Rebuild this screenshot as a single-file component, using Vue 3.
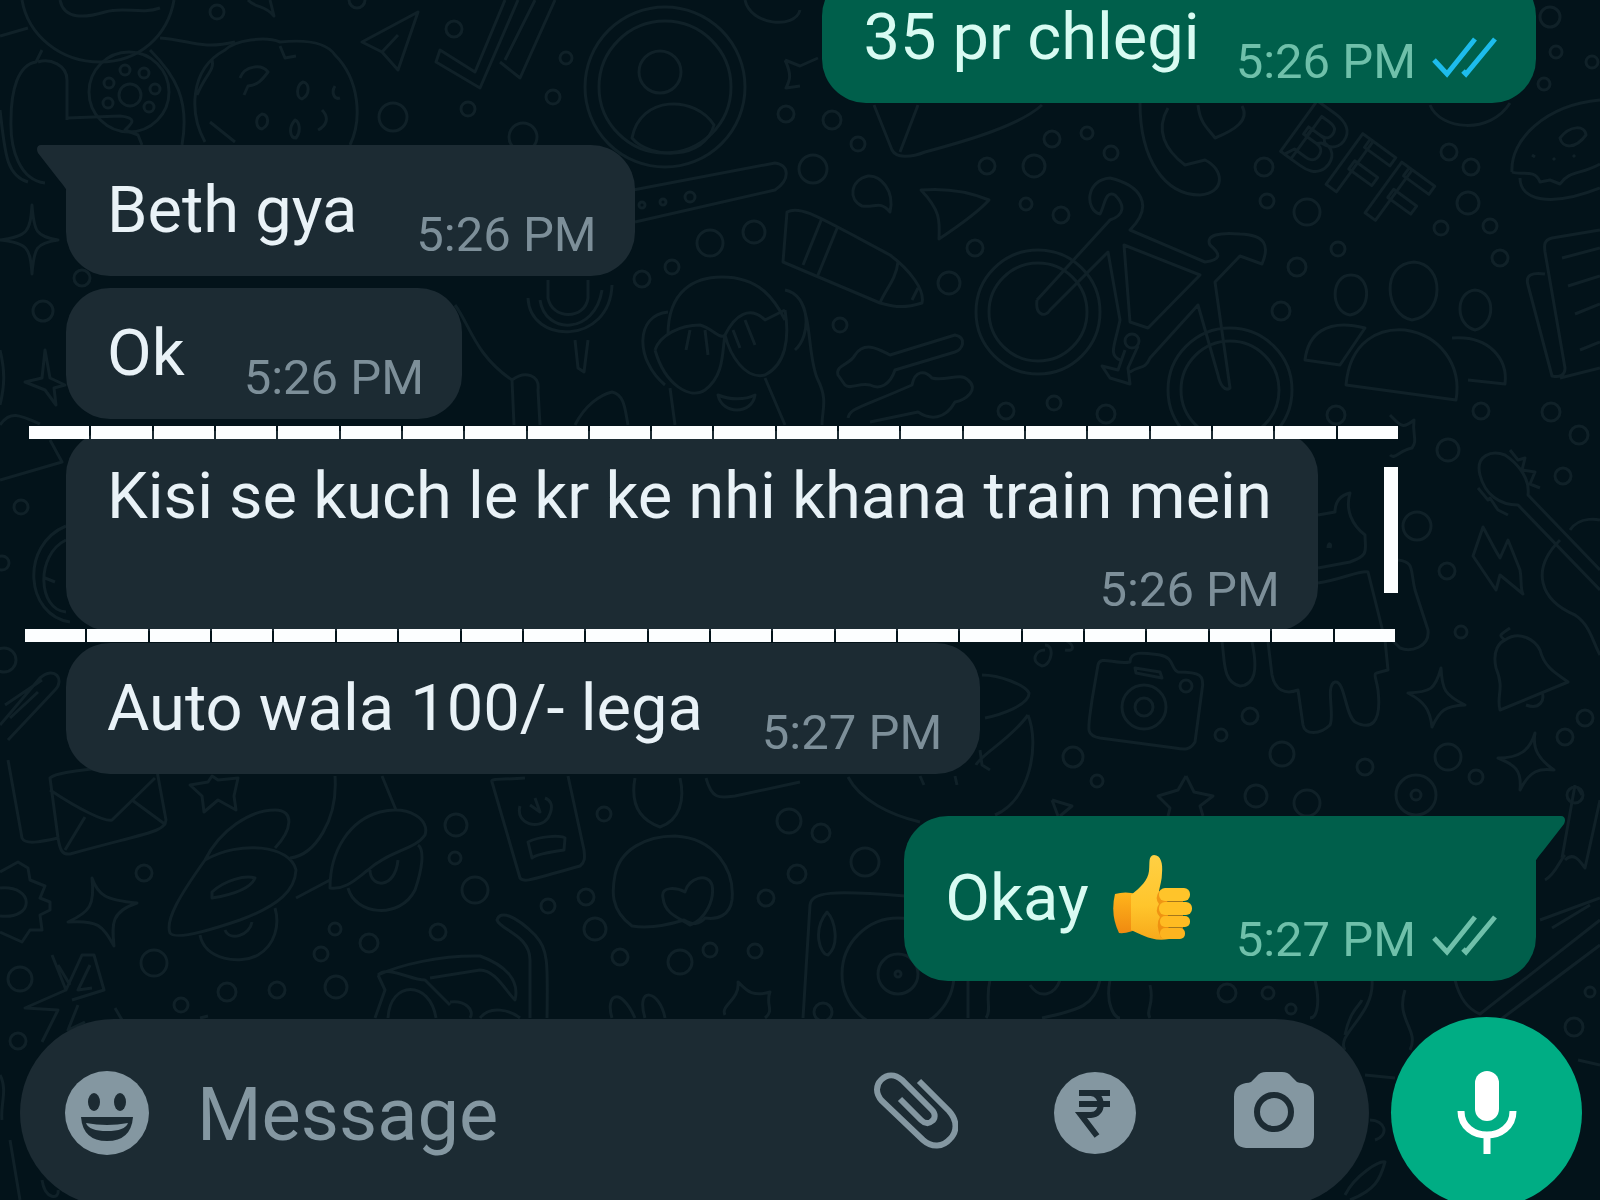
<template>
  <div class="chat">
    <!-- Wallpaper -->
    <svg class="wallpaper" viewBox="0 0 1600 1200" preserveAspectRatio="xMidYMid slice" aria-hidden="true">
      <circle v-for="(dot, i) in dots" :key="'dot' + i" :cx="dot[0]" :cy="dot[1]" :r="dot[2]" />
      <path v-for="(d, i) in doodles" :key="'doodle' + i" :d="d" />
      <text x="0" y="0" transform="translate(1276 148) rotate(36)">BFF</text>
    </svg>

    <main class="messages">
      <article
        v-for="message in messages"
        :key="message.id"
        class="bubble"
        :class="{
          out: message.out,
          first: message.first,
          long: message.marked,
          tall: message.thumb
        }"
      >
        <svg v-if="message.first" class="tail" viewBox="0 0 30 46" aria-hidden="true">
          <path d="M30 0H4C0 0-1 4 1 8L22 35Q28 42 30 46Z" />
        </svg>
        <p class="text">
          {{ message.text }}
          <svg v-if="message.thumb" class="thumb" viewBox="0 0 82 88" role="img" aria-label="thumbs up">
            <defs>
              <linearGradient id="skin" x1="0" y1="0" x2="0" y2="1">
                <stop offset="0" stop-color="#ffd044" />
                <stop offset="0.6" stop-color="#ffc52c" />
                <stop offset="1" stop-color="#f7a91b" />
              </linearGradient>
              <linearGradient id="wrist" x1="0" y1="0" x2="0" y2="1">
                <stop offset="0" stop-color="#ffb51c" />
                <stop offset="1" stop-color="#f08a10" />
              </linearGradient>
            </defs>
            <path fill="url(#wrist)" d="M4 40Q14 37 26 40L30 73Q18 80 8 79Q-1 60 4 40Z" />
            <path
              fill="url(#skin)"
              d="M20 41C30 33 37 26 38 17C39 8 37 2 43 1C50 1 52 10 51 19C51 26 49 31 48 37L56 42L58 85C40 88 30 80 20 76Z"
            />
            <path fill="#e98208" opacity="0.7" d="M49 36Q43 44 48 50Q43 57 49 63Q44 70 50 84L72 80V38Z" />
            <rect fill="#ffc42a" x="48" y="34" width="31" height="13" rx="6" />
            <rect fill="#ffc024" x="48" y="48" width="33" height="13" rx="6" />
            <rect fill="#ffbb22" x="49" y="62" width="30" height="11" rx="5" />
            <rect fill="#fdb41f" x="49" y="74" width="25" height="11" rx="5" />
          </svg>
        </p>
        <footer class="meta">
          <time>{{ message.time }}</time>
          <svg v-if="message.out" class="ticks" :class="{ read: message.read }" viewBox="0 0 66 42" role="img" aria-label="delivered">
            <path d="M2 24 15 38 43 3M31 35 34 38 63 3" />
          </svg>
        </footer>
        <template v-if="message.marked">
          <span class="marker top"><i v-for="n in 22" :key="n"></i></span>
          <span class="marker bottom"><i v-for="n in 22" :key="n"></i></span>
          <span class="marker side"></span>
        </template>
      </article>
    </main>

    <form class="composer" @submit.prevent="send">
      <div class="field">
        <button type="button" aria-label="Emoji">
          <svg viewBox="0 0 84 84">
            <circle cx="42" cy="42" r="42" fill="currentColor" />
            <g class="cut">
              <ellipse cx="29" cy="31" rx="6" ry="9" />
              <ellipse cx="55" cy="31" rx="6" ry="9" />
              <path d="M16 46H68Q66 70 42 70Q18 70 16 46Z" />
            </g>
            <path fill="currentColor" d="M21 52Q42 56 63 52Q60 60 42 60Q24 60 21 52Z" />
          </svg>
        </button>
        <input v-model="draft" type="text" placeholder="Message" aria-label="Message" />
        <button type="button" aria-label="Attach">
          <svg viewBox="0 0 84 84">
            <path
              class="line"
              d="M45 10 75 40C84 50 83 61 76 68C69 76 58 77 49 69L8 30C1 22 2 14 7 9C13 3 21 3 28 9L58 39C62 43 61 48 58 50C55 53 51 53 47 49L26 28"
            />
          </svg>
        </button>
        <button type="button" aria-label="Payment">
          <svg viewBox="0 0 84 84">
            <circle cx="42" cy="42" r="41" fill="currentColor" />
            <path class="rupee" d="M26 22H57M26 33H57M38 22C51 23 51 44 38 44H28L44 65" />
          </svg>
        </button>
        <button type="button" aria-label="Camera">
          <svg viewBox="0 0 84 84">
            <path
              fill="currentColor"
              d="M34 1H50Q56 1 59 5L65 11Q67 12 70 12Q82 14 82 26V64Q82 76 70 77H14Q2 76 2 64V26Q2 14 14 12Q17 12 19 11L25 5Q28 1 34 1Z"
            />
            <circle class="lens" cx="42" cy="41" r="17" />
          </svg>
        </button>
      </div>
      <button class="mic" type="submit" aria-label="Voice message">
        <svg viewBox="0 0 84 84">
          <rect x="30" y="0" width="24" height="50" rx="12" fill="currentColor" />
          <path d="M16 40C16 72 68 72 68 40M42 64V83" />
        </svg>
      </button>
    </form>
  </div>
</template>

<script setup>
import { ref } from 'vue'

const draft = ref('')

const messages = ref([
  { id: 1, text: '35 pr chlegi', time: '5:26 PM', out: true, read: true },
  { id: 2, text: 'Beth gya', time: '5:26 PM', first: true },
  { id: 3, text: 'Ok', time: '5:26 PM' },
  { id: 4, text: 'Kisi se kuch le kr ke nhi khana train mein', time: '5:26 PM', marked: true },
  { id: 5, text: 'Auto wala 100/- lega', time: '5:27 PM' },
  { id: 6, text: 'Okay', time: '5:27 PM', out: true, first: true, thumb: true }
])

function send() {
  const text = draft.value.trim()
  if (!text) return
  const time = new Date().toLocaleTimeString('en-US', { hour: 'numeric', minute: '2-digit' })
  messages.value.push({ id: messages.value.length + 1, text, time, out: true })
  draft.value = ''
}

// small circles scattered over the wallpaper: x, y, radius
const dots = [
  [217, 12, 7], [454, 29, 8], [566, 58, 6], [553, 97, 7], [468, 109, 7], [393, 117, 14],
  [523, 137, 14], [43, 311, 10], [82, 278, 8], [710, 243, 13], [754, 232, 11], [642, 279, 8],
  [672, 267, 7], [786, 114, 8], [642, 205, 3], [663, 202, 3], [690, 197, 5], [357, 0, 8],
  [1550, 17, 10], [1556, 52, 6], [1592, 62, 6], [1544, 84, 6], [832, 120, 9], [858, 144, 7],
  [813, 169, 14], [987, 166, 8], [1034, 166, 11], [1052, 139, 8], [1087, 133, 6], [1111, 153, 7],
  [1264, 167, 9], [1267, 201, 7], [1307, 212, 13], [1449, 152, 8], [1471, 167, 8], [1468, 203, 11],
  [1441, 228, 7], [1490, 226, 7], [1026, 204, 6], [1061, 215, 8], [975, 248, 8], [949, 283, 11],
  [840, 325, 7], [1297, 267, 9], [1338, 249, 7], [1281, 311, 9], [1500, 258, 8], [1006, 411, 8],
  [1054, 403, 7], [1106, 414, 9], [1481, 411, 8], [1551, 412, 9], [1336, 415, 9], [1579, 435, 9],
  [1448, 450, 11], [1563, 476, 8], [1417, 526, 14], [1447, 571, 8], [1461, 632, 6], [1250, 716, 8],
  [1221, 735, 6], [1073, 757, 10], [1282, 754, 12], [1365, 767, 8], [1448, 757, 13], [1476, 777, 7],
  [1565, 737, 8], [1585, 718, 8], [1097, 781, 6], [1256, 796, 11], [1416, 795, 20], [1416, 795, 5],
  [1575, 795, 8], [144, 873, 8], [154, 963, 13], [20, 979, 12], [18, 1041, 8], [227, 992, 9],
  [277, 990, 8], [181, 1005, 7], [336, 987, 11], [321, 954, 7], [335, 929, 6], [369, 943, 9],
  [438, 932, 8], [456, 825, 11], [455, 858, 6], [475, 890, 13], [604, 814, 7], [548, 906, 7],
  [586, 897, 8], [595, 929, 11], [620, 957, 8], [680, 962, 12], [710, 950, 7], [755, 951, 7],
  [766, 898, 8], [789, 821, 12], [797, 874, 9], [821, 833, 9], [865, 862, 14], [1307, 803, 13],
  [1227, 993, 9], [1268, 993, 6], [1291, 1009, 5], [1574, 1027, 9], [1590, 992, 5], [823, 1012, 9],
  [21, 507, 7], [2, 563, 7], [4, 660, 12],
  // flower disc
  [129, 92, 40], [130, 95, 11], [125, 70, 5], [144, 73, 5], [109, 83, 5], [155, 89, 5], [108, 103, 5], [149, 107, 5],
  // contact picture
  [665, 87, 80], [665, 87, 66], [660, 72, 21],
  // bicycle wheels
  [1038, 312, 62], [1038, 312, 49], [1230, 390, 62], [1230, 390, 49], [1132, 341, 7],
  // camera and record player
  [1144, 707, 22], [1144, 707, 9], [1186, 686, 6], [898, 974, 56], [898, 974, 20], [898, 974, 3]
]

const doodles = [
  // ball and blob
  'M22 0C28 35 60 62 100 62C140 62 168 35 174 0M60 0C64 20 85 18 105 12S140 15 160 8M0 36 28 28M160 38C190 40 200 50 235 42',
  'M42 50 36 62C18 65 11 90 11 120C10 150 20 180 45 183M67 120V80C67 65 50 58 38 62M67 118 120 116C140 118 130 125 125 130L138 135 142 145M150 50C175 75 190 100 182 145M0 110C5 150 5 175 28 182',
  // cookie
  'M205 142C190 115 188 70 225 50C235 40 265 36 280 42C300 40 325 40 335 55C360 80 362 120 350 145M197 95C205 75 215 70 212 60M240 78C245 65 262 64 268 72C262 80 258 85 248 86L244 95M280 46 285 58 296 56M303 82C296 85 296 98 302 99C310 95 310 83 303 82ZM335 86C331 92 334 100 340 98M262 114C254 118 256 128 262 129C270 125 269 115 262 114ZM295 120C288 128 290 138 296 138C301 132 300 122 295 120ZM322 110C330 118 326 126 318 130M210 122 235 142',
  // planes and ticks
  'M362 42 418 12 398 70 382 52ZM382 52 398 35M248 0C255 8 265 5 274 16L270 0',
  'M505 0 475 72 440 50 436 62 480 88 518 0M535 0 505 60M555 0 520 78 500 62',
  'M632 138C640 95 695 95 714 125C705 160 650 160 632 138ZM745 0C750 25 795 30 800 10',
  'M633 190 775 163C790 165 790 180 775 190L635 222M785 60 800 66 818 58M785 60C792 75 790 80 786 88L800 86',
  // sparkles
  'M32 205C34 232 36 236 58 240C36 243 34 248 32 274C30 248 28 243 0 240C28 236 30 232 32 205Z',
  'M45 350 50 378 65 385 54 388 56 405 45 390 25 382 42 378Z',
  // comma, cursor, crayon
  'M890 212C895 190 880 175 868 176C850 180 848 200 862 206C875 208 880 200 890 212Z',
  'M921 190C945 188 970 192 989 200C980 210 960 225 939 239C940 220 940 210 921 190Z',
  'M787 212C800 205 815 215 890 255C910 270 925 290 922 303C900 310 890 305 880 303L783 262ZM822 218 803 265M838 226 818 275M898 262C896 280 885 290 880 303M912 300 918 288',
  // bicycle
  'M1037 300 1110 220C1125 215 1125 205 1115 195C1105 190 1105 205 1100 214C1085 210 1085 180 1110 178C1140 185 1155 205 1130 230L1205 262C1220 260 1222 255 1210 245C1205 235 1220 232 1240 234C1265 235 1270 245 1262 264L1240 256 1215 282 1230 388C1225 392 1220 385 1218 375L1198 305 1150 358C1145 370 1140 365 1130 372M1037 300C1035 315 1045 318 1050 310L1108 252 1120 320C1115 345 1108 355 1120 360M1124 245 1200 275 1148 328 1130 322ZM1125 350 1118 370 1102 366 1110 378 1130 384 1128 368 1138 346',
  // phone, sandwich, burger
  'M1140 103C1140 160 1165 195 1200 195C1225 193 1225 170 1205 160L1185 165C1165 150 1155 130 1168 108M1198 105C1200 125 1210 130 1215 138C1235 130 1250 120 1242 106',
  'M874 105 892 150C896 158 910 158 925 152C970 140 1020 125 1042 105M918 105 900 152M1430 105C1440 130 1490 135 1510 103',
  'M1512 172C1510 140 1545 105 1600 100M1512 172C1520 176 1535 168 1540 182L1550 180 1560 184C1570 170 1580 175 1600 164M1520 178C1520 200 1550 208 1600 188M1560 138C1570 125 1585 125 1586 135C1575 150 1562 148 1560 138ZM1535 157 1532 155M1555 160 1553 158M1575 157 1573 155',
  // people
  'M1351 275C1330 275 1330 312 1350 315C1372 312 1372 275 1351 275ZM1414 262C1380 264 1385 315 1412 320C1445 315 1445 264 1414 262ZM1475 290C1455 292 1455 325 1475 330C1496 325 1496 292 1475 290Z',
  'M1346 385C1350 340 1380 328 1405 330C1440 335 1462 365 1456 400ZM1305 360C1308 335 1325 318 1365 328L1340 365ZM1452 338C1490 335 1508 360 1505 384L1468 380',
  // notebook
  'M1600 230 1552 238C1544 240 1544 245 1545 252L1565 368C1565 375 1560 378 1552 376L1528 285C1525 275 1532 272 1545 274M1560 378 1600 368M1562 258 1600 248M1568 286 1600 276M1575 314 1600 304M1580 350 1600 342',
  // microphone
  'M548 280V298C552 320 585 320 588 298V280M528 298C530 345 610 345 612 285M540 300C545 335 595 335 602 290M575 340 578 368 584 372 588 340',
  // monkey
  'M668 335C668 290 695 277 722 277C760 277 775 300 785 320M668 312C635 315 635 360 665 385M655 350C660 335 680 325 700 325C712 328 720 340 725 335C735 315 750 305 765 320L785 310M690 330 686 350M705 330 708 355M745 320 755 345M733 330 740 348M655 350C665 385 690 400 705 390C725 375 722 350 725 335C730 355 745 380 765 375C785 365 790 340 785 310M718 395C730 400 745 400 755 395C752 415 722 415 718 395ZM670 388 675 425M765 378 785 425M785 290C810 295 812 335 795 350M800 300C812 320 808 360 818 380C828 400 822 410 822 425',
  // bones
  'M838 375C835 365 850 365 855 355C865 340 880 350 890 355L955 335C968 338 962 350 955 352L895 370C890 385 880 390 870 385C860 382 850 390 845 385ZM848 418C850 408 860 408 912 385C915 370 925 370 932 378C945 382 960 372 968 380C980 390 965 400 955 402C945 420 930 420 918 412L870 422',
  'M455 305C470 325 475 355 512 380L514 425M512 380C525 370 540 375 538 390L540 425M575 425C585 405 600 395 612 392C625 395 625 410 628 425M0 425C10 410 20 415 40 424M0 350C5 370 5 385 0 405',
  // left column
  'M50 440 62 462 0 480M66 526C20 545 25 615 70 622M66 540C35 555 38 610 66 612M45 578 55 582M0 725 40 678C55 665 65 680 55 690L8 740M5 705 42 680M10 718 38 692',
  // cat head and guitar
  'M1390 415C1400 425 1402 430 1414 420C1412 435 1418 440 1412 448C1400 450 1395 460 1390 455',
  'M1480 475C1475 455 1492 450 1505 455C1520 465 1530 480 1528 495L1600 570M1480 475C1485 495 1500 505 1518 505L1600 590M1510 450 1518 460 1525 458 1522 470 1535 472 1530 484 1540 488M1478 488 1488 500 1490 498 1498 510 1508 515M1570 530C1580 515 1600 520 1600 520M1560 540C1530 570 1540 600 1575 615C1590 625 1592 640 1600 655',
  'M1483 527C1490 540 1495 550 1500 558L1508 540 1520 570C1522 580 1520 588 1523 594L1500 575 1496 590 1473 556Z',
  // unicorn
  'M1318 515 1335 512C1335 500 1342 495 1350 493C1345 510 1352 525 1365 535C1365 550 1370 555 1350 562L1318 568M1318 583C1340 580 1360 570 1368 572L1385 640 1388 670C1370 675 1375 670 1378 690C1382 725 1370 730 1355 722C1345 715 1345 680 1335 682C1325 685 1335 715 1330 725C1320 735 1305 735 1303 725L1298 690C1285 695 1275 690 1272 675L1268 642M1222 642C1225 660 1222 682 1240 686C1255 685 1258 670 1252 642M1398 560C1415 562 1410 570 1415 590L1428 630C1430 648 1410 652 1400 648L1392 640M1330 548C1332 543 1328 542 1328 548',
  // bell
  'M1510 628C1500 635 1498 635 1505 640C1520 630 1535 640 1540 650C1545 670 1560 675 1568 682L1500 710C1496 695 1505 690 1496 668C1492 650 1500 642 1505 640M1526 705C1540 710 1545 700 1542 692',
  // camera
  'M1098 665C1100 655 1115 665 1130 662C1130 650 1145 653 1160 655C1175 658 1170 668 1178 672C1200 672 1205 675 1202 690L1195 742C1190 750 1185 750 1175 748L1100 738C1085 735 1088 730 1092 700ZM1135 668 1160 672 1162 678 1136 673Z',
  'M1045 645C1055 645 1052 665 1042 666C1030 662 1035 650 1045 650M1065 640C1075 645 1075 652 1065 650M982 675C1000 675 1025 685 1029 693C1030 705 1000 715 985 718M1028 715C1010 740 980 755 976 765M1028 715C1040 745 1030 800 995 815M980 750 982 765 990 770M920 776 924 785M955 776 957 785M848 777C860 800 890 815 920 822',
  'M1441 668C1442 690 1445 695 1465 705C1445 706 1440 710 1432 727C1430 710 1425 702 1408 693C1430 692 1435 690 1441 668ZM1535 733C1532 750 1540 760 1554 770C1540 768 1530 770 1520 790C1522 770 1515 765 1498 758C1520 758 1530 750 1535 733Z',
  'M1186 776 1194 792 1213 796 1200 806 1203 816M1186 776 1178 790 1158 796 1170 808 1168 816M1052 800 1072 806 1060 816M1052 800 1058 816',
  // envelope
  'M8 760 22 838C25 845 40 842 58 838M50 778C60 770 100 770 155 760L166 820C165 832 150 832 70 854C62 855 60 850 58 838ZM50 790C80 810 105 822 112 820L155 778M85 817 65 850M132 800 166 825',
  'M190 785 208 782 212 776 218 780 238 778 234 796 236 810 218 800 204 812 202 796Z',
  // scooter
  'M205 860C220 830 250 810 275 810C295 810 292 830 275 848M205 860C240 840 290 845 296 870C295 890 280 905 240 920C205 932 175 940 170 933C165 920 180 895 205 860ZM212 892C225 880 245 875 255 878C250 890 230 895 212 898ZM200 935C205 960 240 965 258 955C275 945 280 925 275 908M225 930C230 942 250 935 252 922M335 776C338 820 315 855 290 858M382 776 396 810M330 888C330 850 350 820 380 812C410 805 430 820 425 835C415 850 390 850 368 870C355 880 345 890 330 888ZM296 898 330 880M348 888C355 915 400 920 415 890C422 870 425 850 418 845M370 870C370 888 395 890 398 860',
  // card
  'M492 782 520 878C524 883 530 880 580 866C585 862 585 858 584 850L568 776M492 782C490 778 500 780 525 778M528 842C540 836 560 835 565 838L564 850C550 852 535 855 532 858ZM520 806C515 825 540 830 548 818C555 805 550 800 545 798M530 805 540 812 535 798',
  'M635 778C630 805 640 820 660 827C680 820 685 800 680 778M706 778C712 800 720 798 735 796L800 782M615 875C620 850 645 836 675 836C715 838 735 870 732 900C730 915 718 920 705 918C700 925 692 925 684 920C665 926 645 928 632 926C610 910 612 890 615 875ZM663 898C660 885 678 888 685 892C688 878 708 872 712 885C715 900 705 920 690 925C680 918 665 915 663 898Z',
  // gear, sparkle, snowflake
  'M0 872 18 862 28 868 30 880 45 886 40 898 50 902 50 910 40 915 42 930 30 930 22 942 0 932M0 888C35 885 35 920 0 916',
  'M92 878C98 895 105 900 137 903C110 912 112 925 114 946C102 925 98 920 68 922C90 912 95 905 92 878Z',
  'M52 955 66 990 82 955 94 955 104 990 72 1000M66 990 25 1008 58 1010 42 1042M78 1005 68 1030 85 1022M90 965 78 990 92 988M58 965 70 985M115 1008 122 1020M200 1018 208 1016',
  // car
  'M378 975C400 965 440 955 480 956C505 965 520 980 515 1000C505 990 495 970 480 970L430 978M378 975C388 965 410 980 425 980L450 1005M378 975 385 990 375 1018M388 1018C390 980 430 980 436 1018M450 1002C465 1000 475 1010 470 1018M480 1018C490 1005 510 1010 520 1018M530 1018V960C530 935 500 930 497 920C500 910 515 915 535 935C548 950 548 960 547 1018',
  'M612 1018C605 995 620 985 635 1018M645 1018C635 985 660 990 665 1018M725 1015C720 1005 740 1000 738 982C745 988 750 998 770 992C765 1005 775 1010 765 1018',
  // record player and the rest of the bottom row
  'M803 1018 810 905C812 892 830 890 905 896M827 912C812 930 820 955 828 955C840 945 835 920 827 912ZM968 980V1018M990 980C985 1000 992 1010 986 1018M1030 985C1040 1000 1055 995 1060 980M1100 980C1095 1005 1080 1010 1042 1018M1110 980C1105 1005 1115 1018 1120 1018M1150 985C1155 1005 1145 1010 1150 1018M1315 980C1320 1000 1318 1018 1310 1018M1372 980C1375 1015 1335 1035 1345 1050M1405 990C1395 1020 1420 1030 1410 1050M1455 980C1460 1000 1470 1010 1480 1014L1600 920M1500 1020 1600 945M1345 1035C1350 1010 1360 1005 1362 1000',
  'M1575 785 1562 858M1578 788 1582 795M1565 860C1575 850 1582 865 1585 868L1600 800M1545 880C1555 875 1560 860 1565 855M1540 920 1600 898M1552 928 1590 905M1578 1060 1600 1065M1365 1075 1395 1078M1370 1120C1385 1120 1390 1135 1375 1140M1345 1195C1355 1175 1380 1160 1385 1162C1380 1180 1375 1190 1350 1200',
  'M0 1075C8 1090 0 1105 2 1120M10 1140 20 1200M42 1180C45 1200 60 1200 58 1190'
]
</script>

<style>
body {
  background: #03131a;
}
</style>

<style scoped>
.chat {
  position: relative;
  height: 100vh;
  overflow: hidden;
  display: flex;
  flex-direction: column;
  background: #03131a;
  color: #e9f2f7;
  font-family: Roboto, 'Liberation Sans', sans-serif;
}

.wallpaper {
  position: absolute;
  inset: 0;
  width: 100%;
  height: 100%;
  fill: none;
  stroke: #102128;
  stroke-width: 3;
  stroke-linejoin: round;
}

.wallpaper text {
  font-size: 88px;
  font-weight: 700;
}

.messages {
  position: relative;
  flex: 1;
  min-height: 0;
  display: flex;
  flex-direction: column;
  justify-content: flex-end;
  align-items: flex-start;
  gap: 12px;
  padding: 0 64px 36px 66px;
}

.bubble {
  position: relative;
  flex: none;
  display: flex;
  align-items: flex-end;
  gap: 59px;
  padding: 26px 38px 12px 41px;
  border-radius: 44px;
  background: #1c2b33;
}

.bubble.out {
  align-self: flex-end;
  gap: 36px;
  background: #005f4b;
  color: #d8fbf2;
}

.bubble.out.tall {
  gap: 43px;
}

.bubble.first {
  margin-top: 30px;
  border-top-left-radius: 0;
}

.bubble.out.first {
  border-top-left-radius: 44px;
  border-top-right-radius: 0;
}

.bubble.long {
  flex-direction: column;
  gap: 11px;
}

.text {
  display: flex;
  align-items: center;
  gap: 22px;
  margin: 0 0 15px;
  font-size: 65px;
  line-height: 78px;
}

.long .text {
  padding-right: 8px;
}

.tall .text {
  line-height: 112px;
}

.thumb {
  width: 82px;
  height: 88px;
}

.meta {
  display: flex;
  align-items: center;
  gap: 16px;
  font-size: 49px;
  line-height: 58px;
  color: #7d8f99;
}

.out .meta {
  color: #6fc0aa;
}

.ticks {
  width: 66px;
  height: 42px;
  margin-bottom: 10px;
  fill: none;
  stroke: currentColor;
  stroke-width: 5;
}

.ticks.read {
  color: #1dbcec;
}

.tail {
  position: absolute;
  top: 0;
  left: -29px;
  width: 30px;
  height: 46px;
  fill: #1c2b33;
}

.out .tail {
  left: auto;
  right: -29px;
  fill: #005f4b;
  transform: scaleX(-1);
}

/* hand-drawn frame around the highlighted message */
.marker {
  position: absolute;
  z-index: 1;
  display: flex;
  gap: 2px;
  height: 13px;
}

.marker i {
  flex: 1;
  background: #fcfeff;
}

.marker.top {
  top: -5px;
  left: -37px;
  right: -80px;
}

.marker.bottom {
  bottom: -11px;
  left: -41px;
  right: -77px;
}

.marker.side {
  top: 36px;
  right: -80px;
  width: 14px;
  height: 126px;
  background: #fcfeff;
}

.composer {
  position: relative;
  flex: none;
  display: flex;
  align-items: center;
  gap: 22px;
  margin-bottom: -8px;
  padding: 0 18px 0 20px;
}

.field {
  flex: 1;
  min-width: 0;
  display: flex;
  align-items: center;
  gap: 95px;
  height: 188px;
  padding: 0 53px 0 45px;
  border-radius: 94px;
  background: #1c2b33;
}

.field input {
  flex: 1;
  min-width: 0;
  margin-left: -47px;
  padding: 4px 0 0;
  border: 0;
  outline: 0;
  background: none;
  color: #e9f2f7;
  font-family: inherit;
  font-size: 74px;
  line-height: 86px;
}

.field input::placeholder {
  color: #8497a1;
  opacity: 1;
}

button {
  flex: none;
  padding: 0;
  border: 0;
  background: none;
  color: #8497a1;
  cursor: pointer;
}

button svg {
  display: block;
  width: 84px;
  height: 84px;
}

.cut {
  fill: #1c2b33;
}

.line {
  fill: none;
  stroke: currentColor;
  stroke-width: 6;
}

.rupee {
  fill: none;
  stroke: #1c2b33;
  stroke-width: 6;
}

.lens {
  fill: none;
  stroke: #1c2b33;
  stroke-width: 6;
}

.mic {
  display: grid;
  place-items: center;
  width: 191px;
  height: 191px;
  border-radius: 50%;
  background: #00ad84;
  color: #fff;
}

.mic path {
  fill: none;
  stroke: currentColor;
  stroke-width: 7;
}
</style>
